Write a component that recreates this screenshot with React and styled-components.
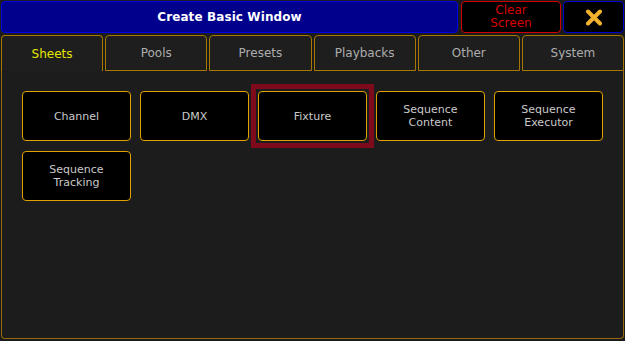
import React from "react";
import styled, { createGlobalStyle, css } from "styled-components";

const Global = createGlobalStyle`
  html, body { margin: 0; padding: 0; background: #1b1b1b; }
  body { font-family: "DejaVu Sans", "Liberation Sans", sans-serif; }
`;

const Window = styled.div`
  box-sizing: border-box;
  width: 625px;
  height: 341px;
  padding: 1px 1px 2px 1px;
  background: #1b1b1b;
  display: flex;
  flex-direction: column;
  overflow: hidden;
`;

const TopBar = styled.div`
  display: flex;
  height: 32px;
  flex: none;
`;

const BarButton = styled.div`
  box-sizing: border-box;
  height: 32px;
  border-radius: 4px;
  border: 1px solid ${(p) => p.$border};
  background: ${(p) => p.$bg};
  display: flex;
  align-items: center;
  justify-content: center;
  text-align: center;
  flex: none;
  width: ${(p) => p.$w}px;
  margin-left: ${(p) => p.$ml || 0}px;
`;

const Title = styled.span`
  color: #ffffff;
  font-weight: bold;
  font-size: 12px;
  letter-spacing: 0.1px;
`;

const ClearText = styled.span`
  color: #d80000;
  font-size: 12px;
  line-height: 13px;
`;

const TabRow = styled.div`
  display: flex;
  gap: 2px;
  margin-top: 2px;
  height: 36px;
  flex: none;
`;

const Tab = styled.div`
  box-sizing: border-box;
  flex: 1;
  border: 1px solid #a67800;
  border-radius: 4px 4px 0 0;
  display: flex;
  align-items: center;
  justify-content: center;
  font-size: 12px;
  color: #adadad;
  background: #1e1e1e;
  ${(p) =>
    p.$active &&
    css`
      border-bottom: none;
      color: #e6e600;
      padding-top: 1px;
    `}
`;

const Panel = styled.div`
  box-sizing: border-box;
  flex: 1;
  border: 1px solid #96690a;
  border-top: none;
  border-radius: 0 0 4px 4px;
  background: #1c1c1c;
  padding: 20px 0 0 20px;
`;

const Grid = styled.div`
  display: grid;
  grid-template-columns: repeat(5, 109px);
  grid-auto-rows: 50px;
  column-gap: 9px;
  row-gap: 10px;
`;

const SheetButton = styled.div`
  position: relative;
  box-sizing: border-box;
  border: 1px solid #e0a000;
  border-radius: 4px;
  background: #000;
  color: #cacaca;
  font-size: 11px;
  line-height: 13px;
  display: flex;
  align-items: center;
  justify-content: center;
  text-align: center;
  ${(p) =>
    p.$selected &&
    css`
      &::after {
        content: "";
        position: absolute;
        inset: -8px;
        border: 5px solid #7e0a1c;
        pointer-events: none;
      }
    `}
`;

const XIcon = () => (
  <svg width="18" height="17" viewBox="0 0 18 17">
    <path
      d="M3 2.5 L15 14.5 M15 2.5 L3 14.5"
      stroke="#f2b22e"
      strokeWidth="4"
      strokeLinecap="round"
      fill="none"
    />
  </svg>
);

const tabs = ["Sheets", "Pools", "Presets", "Playbacks", "Other", "System"];
const sheets = [
  ["Channel"],
  ["DMX"],
  ["Fixture"],
  ["Sequence", "Content"],
  ["Sequence", "Executor"],
  ["Sequence", "Tracking"],
];

export default function App() {
  return (
    <>
      <Global />
      <Window>
        <TopBar>
          <BarButton $w={457} $border="#0000e6" $bg="#00008c">
            <Title>Create Basic Window</Title>
          </BarButton>
          <BarButton $w={100} $ml={3} $border="#d00000" $bg="#000">
            <ClearText>
              Clear
              <br />
              Screen
            </ClearText>
          </BarButton>
          <BarButton $w={61} $ml={2} $border="#0000d0" $bg="#000">
            <XIcon />
          </BarButton>
        </TopBar>
        <TabRow>
          {tabs.map((t, i) => (
            <Tab key={t} $active={i === 0}>
              {t}
            </Tab>
          ))}
        </TabRow>
        <Panel>
          <Grid>
            {sheets.map((lines) => (
              <SheetButton key={lines.join(" ")} $selected={lines[0] === "Fixture"}>
                <span>
                  {lines.map((l, i) => (
                    <React.Fragment key={l}>
                      {i > 0 && <br />}
                      {l}
                    </React.Fragment>
                  ))}
                </span>
              </SheetButton>
            ))}
          </Grid>
        </Panel>
      </Window>
    </>
  );
}
